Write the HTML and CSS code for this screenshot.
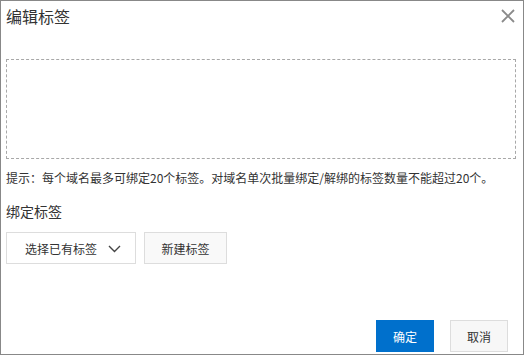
FILE: index.html
```html
<!DOCTYPE html>
<html lang="zh-CN">
<head>
<meta charset="utf-8">
<title>编辑标签</title>
<link rel="stylesheet" href="styles.css">
</head>
<body>
<div class="dialog">
  <div class="header">
    <div class="title">编辑标签</div>
    <svg class="close" width="14" height="14" viewBox="0 0 14 14"><path d="M1 1 L13 13 M13 1 L1 13" stroke="#8a8a8a" stroke-width="1.8" fill="none"/></svg>
  </div>
  <div class="tagbox"></div>
  <div class="hint">提示：每个域名最多可绑定20个标签。对域名单次批量绑定/解绑的标签数量不能超过20个。</div>
  <div class="label">绑定标签</div>
  <div class="actions">
    <div class="btn select">选择已有标签<svg class="chev" width="13" height="8" viewBox="0 0 13 8"><path d="M1 1 L6.5 6.5 L12 1" stroke="#444" stroke-width="1.4" fill="none"/></svg></div>
    <div class="btn new">新建标签</div>
  </div>
  <div class="footer">
    <div class="btn primary">确定</div>
    <div class="btn cancel">取消</div>
  </div>
</div>
</body>
</html>
```
FILE: styles.css
```css
html, body {
  margin: 0;
  padding: 0;
  background: #fff;
}
body {
  font-family: "Noto Sans CJK SC", "Noto Sans", sans-serif;
  color: #333;
}
.dialog {
  width: 524px;
  height: 355px;
  box-sizing: border-box;
  border: 1px solid #888;
  padding: 0 7px 0 5px;
  display: flex;
  flex-direction: column;
}
.header {
  display: flex;
  justify-content: space-between;
  align-items: flex-start;
  padding-top: 3px;
  margin-bottom: 31px;
}
.title {
  font-size: 16px;
  line-height: 24px;
  color: #333;
}
.close {
  margin-top: 5px;
  margin-right: 1px;
}
.tagbox {
  height: 100px;
  box-sizing: border-box;
  border: 1px dashed #a8a8a8;
}
.hint {
  margin-top: 10px;
  font-size: 12px;
  line-height: 18px;
  color: #333;
}
.label {
  margin-top: 14px;
  font-size: 14px;
  line-height: 20px;
  color: #333;
}
.actions {
  margin-top: 11px;
  display: flex;
  gap: 8px;
}
.btn {
  height: 32px;
  box-sizing: border-box;
  border: 1px solid #ddd;
  font-size: 12px;
  display: flex;
  align-items: center;
  justify-content: center;
  color: #333;
}
.select {
  width: 130px;
  background: #fff;
  gap: 11px;
  padding-left: 4px;
}
.chev {
  margin-top: 1px;
}
.new {
  width: 83px;
  background: #f9f9f9;
}
.footer {
  margin-top: auto;
  padding-bottom: 2px;
  padding-right: 8px;
  display: flex;
  justify-content: flex-end;
  gap: 16px;
}
.primary {
  width: 58px;
  background: #0070cc;
  border-color: #0070cc;
  color: #fff;
}
.cancel {
  width: 58px;
  background: #f7f7f7;
}
```
